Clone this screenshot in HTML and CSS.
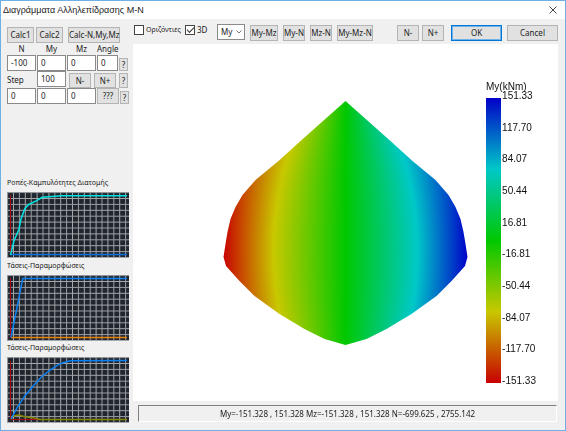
FILE: index.html
```html
<!DOCTYPE html>
<html lang="el">
<head>
<meta charset="utf-8">
<title>Διαγράμματα Αλληλεπίδρασης M-N</title>
<link rel="stylesheet" href="styles.css">
</head>
<body>
<div class="window">
  <header class="titlebar">
    <h1 class="title">Διαγράμματα Αλληλεπίδρασης M-N</h1>
    <button class="close" type="button" aria-label="Close">
      <svg width="8" height="8" viewBox="0 0 8 8" aria-hidden="true"><path d="M0.5 0.5L7.5 7.5M7.5 0.5L0.5 7.5" fill="none" stroke="#333" stroke-width="0.9"/></svg>
    </button>
  </header>
  <div class="content">
    <aside class="side">
      <div class="row row-calc">
        <button class="btn w-calc" type="button">Calc1</button>
        <button class="btn w-calc" type="button">Calc2</button>
        <button class="btn w-calc-all" type="button">Calc-N,My,Mz</button>
      </div>
      <div class="row row-labels">
        <label class="w-field" for="n">N</label>
        <label class="w-field" for="my">My</label>
        <label class="w-field" for="mz">Mz</label>
        <label class="w-angle" for="angle">Angle</label>
      </div>
      <div class="row row-fields">
        <input class="field w-field" id="n" value="-100">
        <input class="field w-field" id="my" value="0">
        <input class="field w-field" id="mz" value="0">
        <input class="field w-angle" id="angle" value="0">
        <button class="btn w-help" type="button">?</button>
      </div>
      <div class="row row-step">
        <label class="w-field step" for="step">Step</label>
        <input class="field w-field" id="step" value="100">
        <div class="step-buttons">
          <button class="btn w-step" type="button">N-</button>
          <button class="btn w-step" type="button">N+</button>
          <button class="btn w-help" type="button">?</button>
        </div>
      </div>
      <div class="row row-fields">
        <input class="field w-field" aria-label="N result" value="0">
        <input class="field w-field" aria-label="My result" value="0">
        <input class="field w-field" aria-label="Mz result" value="0">
        <button class="btn w-query" type="button">???</button>
        <button class="btn w-help" type="button">?</button>
      </div>
      <div class="charts">
        <figure class="chart">
          <figcaption>Ροπές-Καμπυλότητες Διατομής</figcaption>
          <svg class="plot" viewBox="0 0 122 66" preserveAspectRatio="none" aria-hidden="true">
            <defs>
              <pattern id="grid" x="6" y="6" width="11.8" height="11.8" patternUnits="userSpaceOnUse">
                <path d="M0.5 0V11.8M0 0.5H11.8" stroke="#a6a8ab" fill="none"/>
                <path d="M6.4 0V11.8M0 6.4H11.8" stroke="#9c9ea2" fill="none"/>
              </pattern>
            </defs>
            <rect width="122" height="66" fill="#20262e"/>
            <rect width="122" height="66" fill="url(#grid)"/>
            <path d="M3.5 3V63" stroke="#a80c12"/>
            <path d="M4 62.5H120" stroke="#0a6fe0" stroke-width="1.4"/>
            <path d="M3.5 63L7 48.7L12 37.3L13.7 28L17.7 17L21.3 12.7L29.7 8.7L35.3 5.3L54.7 3.8H120" fill="none" stroke="#00e4e4" stroke-width="1.5"/>
          </svg>
        </figure>
        <figure class="chart">
          <figcaption>Τάσεις-Παραμορφώσεις</figcaption>
          <svg class="plot" viewBox="0 0 122 66" preserveAspectRatio="none" aria-hidden="true">
            <rect width="122" height="66" fill="#20262e"/>
            <rect width="122" height="66" fill="url(#grid)"/>
            <path d="M3.5 3V63" stroke="#a80c12"/>
            <path d="M4 62.5H120" stroke="#e8830c" stroke-width="1.4"/>
            <path d="M4 62.5L11.5 25L15.7 3.5H120" fill="none" stroke="#0a80f5" stroke-width="1.5"/>
          </svg>
        </figure>
        <figure class="chart">
          <figcaption>Τάσεις-Παραμορφώσεις</figcaption>
          <svg class="plot" viewBox="0 0 122 66" preserveAspectRatio="none" aria-hidden="true">
            <rect width="122" height="66" fill="#20262e"/>
            <rect width="122" height="66" fill="url(#grid)"/>
            <path d="M3.5 4V62.5H33" fill="none" stroke="#a80c12"/>
            <path d="M4 62L6.3 59L11.3 58L18 59.7L26 60.7L33 62.5H120" fill="none" stroke="#858500" stroke-width="1.4"/>
            <path d="M4 62L9.7 51.3L18 38.7L26.3 28.7L34.7 19.7L43 13L53 6.7L63 3.7L120 3.5" fill="none" stroke="#0a80f5" stroke-width="1.5"/>
          </svg>
        </figure>
      </div>
    </aside>
    <main class="main">
      <div class="toolbar">
        <label class="check check-wide"><input type="checkbox">Οριζόντιες</label>
        <label class="check"><input type="checkbox" checked>3D</label>
        <div class="combo">
          <select aria-label="Axis"><option>My</option><option>Mz</option><option>N</option></select>
          <svg class="chevron" width="6" height="4" viewBox="0 0 6 4" aria-hidden="true"><path d="M0.5 0.5L3 3L5.5 0.5" fill="none" stroke="#555" stroke-width="0.8"/></svg>
        </div>
        <div class="group views">
          <button class="btn w-pair" type="button">My-Mz</button>
          <button class="btn w-short" type="button">My-N</button>
          <button class="btn w-short" type="button">Mz-N</button>
          <button class="btn w-triple" type="button">My-Mz-N</button>
        </div>
        <div class="group steps">
          <button class="btn w-step" type="button">N-</button>
          <button class="btn w-step" type="button">N+</button>
        </div>
        <div class="group">
          <button class="btn w-dialog default" type="button">OK</button>
          <button class="btn w-dialog" type="button">Cancel</button>
        </div>
      </div>
      <section class="view">
        <canvas class="surface" id="surface" width="245" height="245" role="img" aria-label="My-Mz-N"></canvas>
        <div class="legend">
          <div class="legend-title">My(kNm)</div>
          <div class="scale">
            <div class="bar"></div>
            <ol class="ticks">
              <li>151.33</li><li>117.70</li><li>84.07</li><li>50.44</li><li>16.81</li>
              <li>-16.81</li><li>-50.44</li><li>-84.07</li><li>-117.70</li><li>-151.33</li>
            </ol>
          </div>
        </div>
      </section>
      <output class="status">My=-151.328 , 151.328 Mz=-151.328 , 151.328 N=-699.625 , 2755.142</output>
    </main>
  </div>
</div>
<script src="surface.js"></script>
</body>
</html>
```
FILE: surface.js
```js
// Right half of the symmetric outline: distance from the axis, height from the top.
const outline = [
  [0, 0], [45, 40], [67, 60], [90, 79], [103, 94], [110, 106],
  [115, 118], [118, 131], [120, 143], [122, 156], [119.5, 165],
  [106, 180], [91, 195], [66, 213], [41, 228], [21, 238], [0, 244]
];
const canvas = document.getElementById("surface");
const ctx = canvas.getContext("2d");
const axis = 122.5;

ctx.beginPath();
outline.forEach(([x, y]) => ctx.lineTo(axis + x, y));
outline.slice().reverse().forEach(([x, y]) => ctx.lineTo(axis - x, y));
ctx.closePath();
ctx.clip();

// The middle bands narrow away from the widest level.
for (let y = 0; y < canvas.height; y++) {
  const band = 72 - 10 * ((y - 150) / 80) ** 2;
  const g = ctx.createLinearGradient(0, 0, canvas.width, 0);
  g.addColorStop(0, "#c80000");
  g.addColorStop((axis - band) / canvas.width, "#c8c800");
  g.addColorStop(0.5, "#00c800");
  g.addColorStop((axis + band) / canvas.width, "#00c8c8");
  g.addColorStop(1, "#0000c8");
  ctx.fillStyle = g;
  ctx.fillRect(0, y, canvas.width, 1);
}
```
FILE: styles.css
```css
* { box-sizing: border-box; }

body {
  margin: 0;
  background: #f0f0f0;
  color: #222;
  font: 8px/10px "Noto Sans", sans-serif;
}

button, input, select { font: inherit; color: inherit; margin: 0; }

.window {
  display: flex;
  flex-direction: column;
  min-height: 100vh;
  border: 1px solid #6fafe4;
}

.titlebar {
  display: flex;
  align-items: center;
  justify-content: space-between;
  height: 18px;
  padding: 0 8px 0 2px;
  background: #fff;
}

.title { margin: 0; font: 9px/16px "Liberation Sans", sans-serif; color: #222; }

.close { display: flex; padding: 0; border: 0; background: none; }

.content { display: flex; flex: 1; }

.side {
  display: flex;
  flex-direction: column;
  flex: none;
  width: 132px;
  padding: 8px 2px 7px 6px;
}

.row { display: flex; gap: 1px; }
.row-calc { gap: 2px; }
.row-labels { height: 12px; padding-top: 1px; text-align: center; }
.row-fields { height: 16px; align-items: flex-end; }
.row-step { height: 17px; }
.step { padding-top: 4px; text-align: left; }
.step-buttons { display: flex; gap: 3px; padding: 2px 0 0 2px; }

.btn {
  height: 16px;
  padding: 0;
  border: 1px solid #b4b4b4;
  background: #e1e1e1;
  text-align: center;
  white-space: nowrap;
}
.side .btn.w-step, .side .btn.w-help { height: 15px; }
.side .row-fields .btn.w-help { height: 13px; }

.field {
  height: 16px;
  padding: 0 3px 2px;
  border: 1px solid #8a8a8a;
  background: #fff;
}

.w-calc { width: 27px; }
.w-calc-all { width: 52px; margin-left: 3px; }
.w-field { width: 29px; }
.w-angle { width: 21px; }
.w-help { width: 9px; }
.w-step { width: 22px; }
.w-query { width: 22px; }
.w-pair { width: 28px; }
.w-short { width: 22px; }
.w-triple { width: 36px; }
.w-dialog { width: 51px; }
.default { border: 1px solid #0078d7; box-shadow: inset 0 0 0 1px #6fb2ea; }

.charts {
  display: flex;
  flex-direction: column;
  justify-content: space-between;
  flex: 1;
  padding-top: 74px;
}

.chart { margin: 0; width: 122px; }
figcaption { height: 14px; font-size: 7px; white-space: nowrap; }
.plot { display: block; width: 100%; height: 66px; }

.main {
  display: flex;
  flex-direction: column;
  flex: 1;
  padding-right: 7px;
}

.toolbar {
  display: flex;
  align-items: flex-start;
  height: 25px;
  padding-top: 6px;
}

.check { display: flex; align-items: center; gap: 2px; width: 32px; white-space: nowrap; }
.check-wide { width: 52px; padding-left: 1px; font-size: 7px; }
.check input {
  appearance: none;
  flex: none;
  width: 10px;
  height: 10px;
  border: 1px solid #444;
  background: #fff;
}
.check input:checked::after {
  content: "";
  display: block;
  width: 6px;
  height: 3px;
  margin: 1px;
  border: solid #333;
  border-width: 0 0 1px 1px;
  transform: rotate(-45deg);
}

.combo { position: relative; width: 28px; margin-top: -1px; }
.combo select {
  appearance: none;
  display: block;
  width: 100%;
  height: 16px;
  padding: 0 3px;
  border: 1px solid #8a8a8a;
  border-radius: 0;
  background: #fff;
}
.chevron { position: absolute; right: 3px; top: 6px; pointer-events: none; }

.group { display: flex; gap: 5px; }
.views { margin-left: 5px; }
.steps { gap: 3px; margin: 0 7px 0 auto; }

.view {
  display: flex;
  flex: 1;
  align-items: flex-start;
  justify-content: flex-end;
  padding: 37px 22px 0 0;
  background: #fff;
}

.surface { display: block; margin: 20px 18px 0 0; }

.legend { width: 50px; font: 10px/12px "Liberation Sans", sans-serif; color: #111; }
.legend-title { height: 17px; white-space: nowrap; }
.scale { display: flex; }
.bar {
  width: 17px;
  height: 285px;
  background: linear-gradient(#0000c8, #00c8c8 25%, #00c800 50%, #c8c800 75%, #c80000);
}
.ticks {
  display: flex;
  flex-direction: column;
  justify-content: space-between;
  height: 297px;
  margin: -8px 0 0 1px;
  padding: 0;
  list-style: none;
}

.status {
  height: 17px;
  margin: 4px 1px 8px 5px;
  border: 1px solid;
  border-color: #808080 #fff #fff #808080;
  line-height: 15px;
  text-align: center;
}
```
